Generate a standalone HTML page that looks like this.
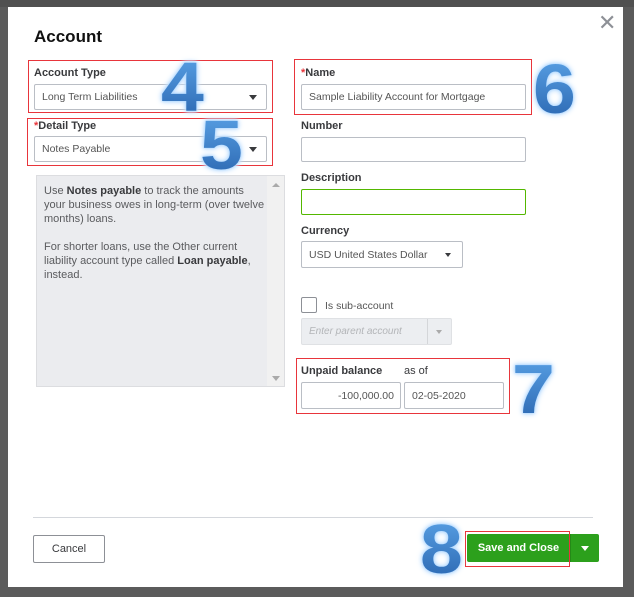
<!DOCTYPE html>
<html><head><meta charset="utf-8"><style>
*{box-sizing:border-box;margin:0;padding:0}
body{width:634px;height:597px;background:#5b5b5b;position:relative;overflow:hidden;font-family:"Liberation Sans",sans-serif;color:#393a3d}
.a{position:absolute}
.modal{left:8px;top:7px;width:615px;height:580px;background:#fff}
.lbl{font-size:11px;font-weight:bold;color:#393a3d}
.inp{border:1px solid #babec5;border-radius:2px;background:#fff;font-size:10.5px;color:#555;padding-left:7px;line-height:25px;white-space:nowrap;overflow:hidden}
.red{border:1px solid #e8353b}
.dd{position:absolute;width:0;height:0;border-left:4px solid transparent;border-right:4px solid transparent;border-top:5px solid #393a3d}
.num{font-size:70px;font-weight:bold;line-height:1;color:#2f73bf;transform:scaleX(1.1);transform-origin:left top;
 background:linear-gradient(#5aa2e6,#2a66b0);-webkit-background-clip:text;background-clip:text;-webkit-text-fill-color:transparent;
 filter:drop-shadow(0 0 1px #a8d4ff) drop-shadow(0 0 2px #bfe0ff) drop-shadow(0 0 2px #cfe6ff)}
.ast{color:#e8353b}
</style></head><body>
<div class="a" style="left:0;top:0;width:634px;height:7px;background:#505050"></div>
<div class="a modal"></div>
<div class="a" style="left:34px;top:27px;font-size:17px;font-weight:bold;color:#111">Account</div>
<div class="a" style="left:598px;top:12px;font-size:22px;color:#8d9096;line-height:22px">✕</div>

<div class="a red" style="left:28px;top:60px;width:245px;height:53px"></div>
<div class="a lbl" style="left:34px;top:67px">Account Type</div>
<div class="a inp" style="left:34px;top:84px;width:233px;height:26px">Long Term Liabilities</div>
<div class="dd" style="left:249px;top:95px"></div>

<div class="a red" style="left:27px;top:118px;width:246px;height:48px"></div>
<div class="a lbl" style="left:34px;top:120px"><span class="ast">*</span>Detail Type</div>
<div class="a inp" style="left:34px;top:136px;width:233px;height:26px">Notes Payable</div>
<div class="dd" style="left:249px;top:147px"></div>

<div class="a" style="left:36px;top:175px;width:249px;height:212px;background:#ebecef;border:1px solid #dcdde0"></div>
<div class="a" style="left:267px;top:176px;width:17px;height:210px;background:#f1f1f1"></div>
<div class="dd" style="left:272px;top:183px;border-top:0;border-bottom:4px solid #aaa"></div>
<div class="dd" style="left:272px;top:376px;border-top-color:#aaa"></div>
<div class="a" style="left:44px;top:184px;width:222px;font-size:11px;line-height:14px;color:#5a5b5e">Use <b style="color:#393a3d">Notes payable</b> to track the amounts your business owes in long-term (over twelve months) loans.<br><br>For shorter loans, use the Other current liability account type called <b style="color:#393a3d">Loan payable</b>, instead.</div>

<div class="a red" style="left:294px;top:59px;width:238px;height:56px"></div>
<div class="a lbl" style="left:301px;top:67px"><span class="ast">*</span>Name</div>
<div class="a inp" style="left:301px;top:84px;width:225px;height:26px">Sample Liability Account for Mortgage</div>

<div class="a lbl" style="left:301px;top:120px">Number</div>
<div class="a inp" style="left:301px;top:137px;width:225px;height:25px"></div>
<div class="a lbl" style="left:301px;top:172px">Description</div>
<div class="a inp" style="left:301px;top:189px;width:225px;height:26px;border-color:#53b700"></div>
<div class="a lbl" style="left:301px;top:225px">Currency</div>
<div class="a inp" style="left:301px;top:241px;width:162px;height:27px;line-height:26px">USD United States Dollar</div>
<div class="dd" style="left:445px;top:253px;border-left-width:3px;border-right-width:3px;border-top-width:4px"></div>

<div class="a" style="left:301px;top:297px;width:16px;height:16px;border:1px solid #8d9096;border-radius:2px"></div>
<div class="a" style="left:325px;top:300px;font-size:10.5px;color:#555">Is sub-account</div>
<div class="a" style="left:301px;top:318px;width:151px;height:27px;background:#eceef1;border:1px solid #dfe1e4;border-radius:2px"></div>
<div class="a" style="left:427px;top:319px;width:1px;height:25px;background:#d4d6d9"></div>
<div class="a" style="left:309px;top:326px;font-size:10px;font-style:italic;color:#b3b5b8">Enter parent account</div>
<div class="dd" style="left:436px;top:330px;border-top-color:#aaa;border-left-width:3px;border-right-width:3px;border-top-width:4px"></div>

<div class="a red" style="left:296px;top:358px;width:214px;height:56px"></div>
<div class="a lbl" style="left:301px;top:365px">Unpaid balance</div>
<div class="a lbl" style="left:404px;top:365px;font-weight:normal;color:#393a3d">as of</div>
<div class="a inp" style="left:301px;top:382px;width:100px;height:27px;line-height:26px;text-align:right;padding-right:6px">-100,000.00</div>
<div class="a inp" style="left:404px;top:382px;width:100px;height:27px;line-height:26px;padding-left:7px">02-05-2020</div>

<div class="a" style="left:33px;top:517px;width:560px;height:1px;background:#d4d7dc"></div>
<div class="a" style="left:33px;top:535px;width:72px;height:28px;border:1px solid #8d9096;border-radius:2px;font-size:11px;text-align:center;line-height:26px;color:#393a3d">Cancel</div>
<div class="a" style="left:467px;top:534px;width:132px;height:28px;background:#2ca01c;border-radius:2px"></div>
<div class="a" style="left:570px;top:534px;width:1px;height:28px;background:#248a17"></div>
<div class="a" style="left:467px;top:534px;width:103px;text-align:center;line-height:28px;font-size:11px;font-weight:bold;color:#fff">Save and Close</div>
<div class="dd" style="left:581px;top:546px;border-top-color:#fff"></div>
<div class="a red" style="left:465px;top:531px;width:105px;height:36px"></div>

<div class="a num" style="left:161px;top:52px">4</div>
<div class="a num" style="left:200px;top:110px">5</div>
<div class="a num" style="left:533px;top:54px">6</div>
<div class="a num" style="left:512px;top:354px">7</div>
<div class="a num" style="left:420px;top:514px">8</div>
</body></html>
